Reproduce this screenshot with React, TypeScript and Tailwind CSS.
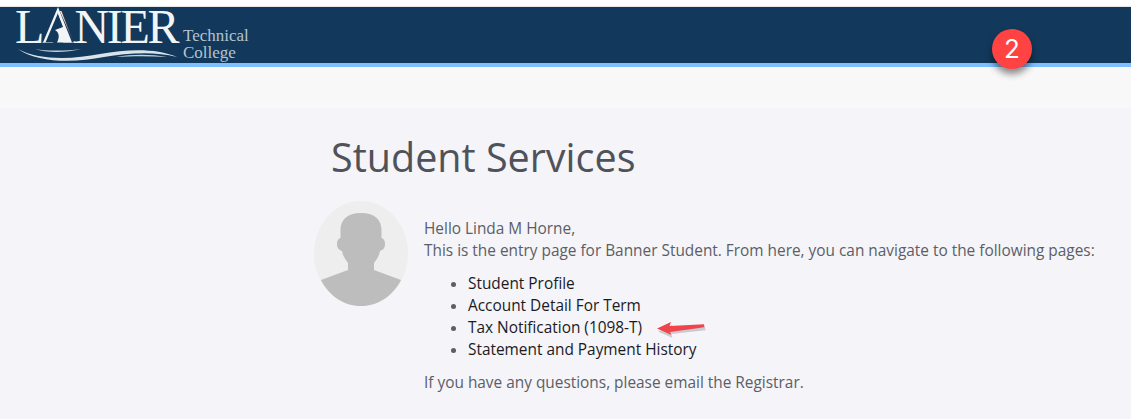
const links = [
  "Student Profile",
  "Account Detail For Term",
  "Tax Notification (1098-T)",
  "Statement and Payment History",
];

function Logo() {
  return (
    <div className="relative h-[56px] w-[240px] shrink-0 text-white">
      <div className="absolute left-[-1px] top-[-8px] font-['Liberation_Serif',serif] text-[48px] leading-[56px] tracking-[-2.3px] text-[#f2f5f8]">
        LANIER
      </div>
      {/* sail over the A, and the waves under the name */}
      <svg className="absolute left-0 top-0" width="170" height="56" viewBox="0 0 170 56" fill="none">
        <path d="M26 35.500 L42 0 L58 35.500 Z" fill="#12395b" />
        <path d="M42 0 L27 35.500 L29.500 35.500 L42 6 Z" fill="#f2f5f8" />
        <path d="M42 0 L56 35.500 L41 35.500 C44 30 43 25 39 23 L47 20 L42 7 Z" fill="#f2f5f8" />
        <path d="M2 42 C24 54 58 52 84 47 C112 42 140 41 161 50 C138 44 112 46 88 50 C58 56 22 56 2 42 Z" fill="#dbe3ea" />
        <path d="M19 42 C30 44 50 44 65 42 C50 46 30 46 19 42 Z" fill="#c6d1db" />
        <path d="M100 50 C116 47 134 47 151 50 C134 49 116 49 100 50 Z" fill="#c6d1db" />
      </svg>
      <div className="absolute left-[167px] top-[20px] font-['Liberation_Serif',serif] text-[17px] leading-[17px] text-[#b5c3d0]">
        <div>Technical</div>
        <div>College</div>
      </div>
    </div>
  );
}

function Avatar() {
  return (
    <svg width="94" height="105" viewBox="0 0 94 105" className="shrink-0">
      <ellipse cx="47" cy="52.5" rx="47" ry="52.5" fill="#eeeeee" />
      <path
        d="M47 12 C33 12 26.500 19 26.500 29 L26.500 37 C23.500 38 23 41 23 43 C23 47 25 49 28 50 C29 55 31 58 34 62 L34 69 L7 79 C15 95 30 105 47 105 C64 105 79 95 87 79 L60 69 L60 62 C63 58 65 55 66 50 C69 49 71 47 71 43 C71 41 70.500 38 67.500 37 L67.500 29 C67.500 19 61 12 47 12 Z"
        fill="#bdbdbd"
      />
    </svg>
  );
}

export default function App() {
  return (
    <div className="relative h-[419px] w-[1131px] overflow-hidden bg-[#f4f4f9] font-['Open_Sans',sans-serif] text-[15.4px] leading-[22px] text-[#5c5e66]">
      <div className="h-[6px] bg-white" />
      <div className="h-px bg-[#e6e6e6]" />
      <header className="flex h-[56px] items-start bg-[#12395b] pl-[16px]">
        <Logo />
      </header>
      <div className="h-[4px] bg-[#7fbfff]" />
      <div className="h-[41px] bg-[#f8f8f8]" />

      <main className="pl-[314px] pt-[23px]">
        <h1 className="pl-[17px] text-[39.5px] leading-[52px] text-[#50525a]">Student Services</h1>
        <div className="mt-[18px] flex gap-[16px]">
          <Avatar />
          <div className="pt-[17px]">
            <p>Hello Linda M Horne,</p>
            <p className="whitespace-nowrap">This is the entry page for Banner Student. From here, you can navigate to the following pages:</p>
            <ul className="mt-[11px] list-disc pl-[44px] text-[#1b1b1f] marker:text-[#5c5e66]">
              {links.map((link) => (
                <li key={link}>{link}</li>
              ))}
            </ul>
            <p className="mt-[11px]">If you have any questions, please email the Registrar.</p>
          </div>
        </div>
      </main>

      {/* annotations on top of the screenshot */}
      <div className="absolute left-[992px] top-[29px] flex h-[40px] w-[40px] items-center justify-center rounded-full bg-[#ff4343] font-['Inter',sans-serif] text-[26px] leading-none text-white shadow-[0_5px_7px_rgba(0,0,0,0.45)]">
        2
      </div>
      <svg className="absolute left-[654px] top-[318px]" width="56" height="22" viewBox="0 0 56 22" fill="none">
        <path d="M3 11.500 L17 5 L15.500 9.300 L50 7.200 L50.500 10.200 L16 14 L17.500 18 Z" fill="#b9b9bd" transform="translate(1 2)" opacity="0.7" />
        <path d="M3 10.500 L17 4 L15.500 8 L50 6.200 L50.500 9.200 L16 14 L17.500 17 Z" fill="#f0444c" />
      </svg>
    </div>
  );
}
